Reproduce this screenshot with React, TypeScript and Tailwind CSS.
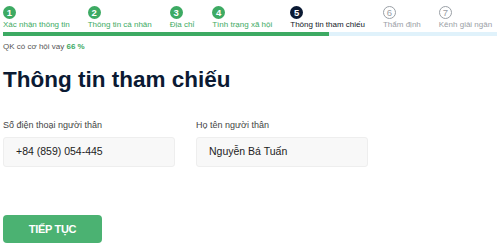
import React from "react";

const steps = [
  { n: 1, label: "Xác nhận thông tin", state: "done" },
  { n: 2, label: "Thông tin cá nhân", state: "done" },
  { n: 3, label: "Địa chỉ", state: "done" },
  { n: 4, label: "Tình trạng xã hội", state: "done" },
  { n: 5, label: "Thông tin tham chiếu", state: "active" },
  { n: 6, label: "Thẩm định", state: "todo" },
  { n: 7, label: "Kênh giải ngân", state: "todo" },
];

export default function App() {
  return (
    <div className="w-[500px] h-[247px] bg-white overflow-hidden" style={{ fontFamily: '"Liberation Sans", Arial, sans-serif' }}>
      <div className="px-[3px] pt-[6px]">
        <div className="flex gap-[18px] whitespace-nowrap">
          {steps.map((s) => (
            <div key={s.n} className="flex flex-col items-start">
              {s.state === "done" && (
                <div className="w-[13px] h-[13px] rounded-full bg-[#3daa63] text-white text-[9.5px] font-bold flex items-center justify-center leading-none">{s.n}</div>
              )}
              {s.state === "active" && (
                <div className="w-[13px] h-[13px] rounded-full bg-[#0b1a33] text-white text-[9.5px] font-bold flex items-center justify-center leading-none">{s.n}</div>
              )}
              {s.state === "todo" && (
                <div className="w-[13px] h-[13px] rounded-full border border-[#9aa0a6] text-[#9aa0a6] text-[9.5px] flex items-center justify-center leading-none">{s.n}</div>
              )}
              <div className={`text-[8px] leading-[10px] mt-[1px] ${s.state === "done" ? "text-[#3daa63]" : s.state === "active" ? "text-[#111827]" : "text-[#9aa0a6]"}`}>{s.label}</div>
            </div>
          ))}
        </div>
        <div className="mt-[2px] h-[4px] w-[494px] bg-[#e0f2fb] flex">
          <div className="h-full w-[326px] bg-[#3daa63]" />
        </div>
        <div className="mt-[6px] text-[8px] leading-[10px] text-[#555]">
          QK có cơ hội vay <span className="text-[#3daa63] font-bold">66 %</span>
        </div>
        <h1 className="mt-[15px] text-[22.5px] font-bold text-[#0b1a33] leading-[26px]">Thông tin tham chiếu</h1>
        <div className="mt-[26px] flex gap-[21px]">
          <div className="flex flex-col">
            <label className="text-[9px] text-[#444] leading-[12px]">Số điện thoại người thân</label>
            <div className="mt-[6px] w-[172px] h-[30px] rounded-[3px] border border-[#eeeeee] bg-[#f8f8f8] flex items-center pl-[12px] text-[10.5px] text-[#222]">+84 (859) 054-445</div>
          </div>
          <div className="flex flex-col">
            <label className="text-[9px] text-[#444] leading-[12px]">Họ tên người thân</label>
            <div className="mt-[6px] w-[172px] h-[30px] rounded-[3px] border border-[#eeeeee] bg-[#f8f8f8] flex items-center pl-[12px] text-[10.5px] text-[#222]">Nguyễn Bá Tuấn</div>
          </div>
        </div>
        <button className="mt-[48px] w-[99px] h-[28px] rounded-[4px] bg-[#4bb272] text-white text-[11px] font-bold flex items-center justify-center tracking-[-0.3px]">TIẾP TỤC</button>
      </div>
    </div>
  );
}
